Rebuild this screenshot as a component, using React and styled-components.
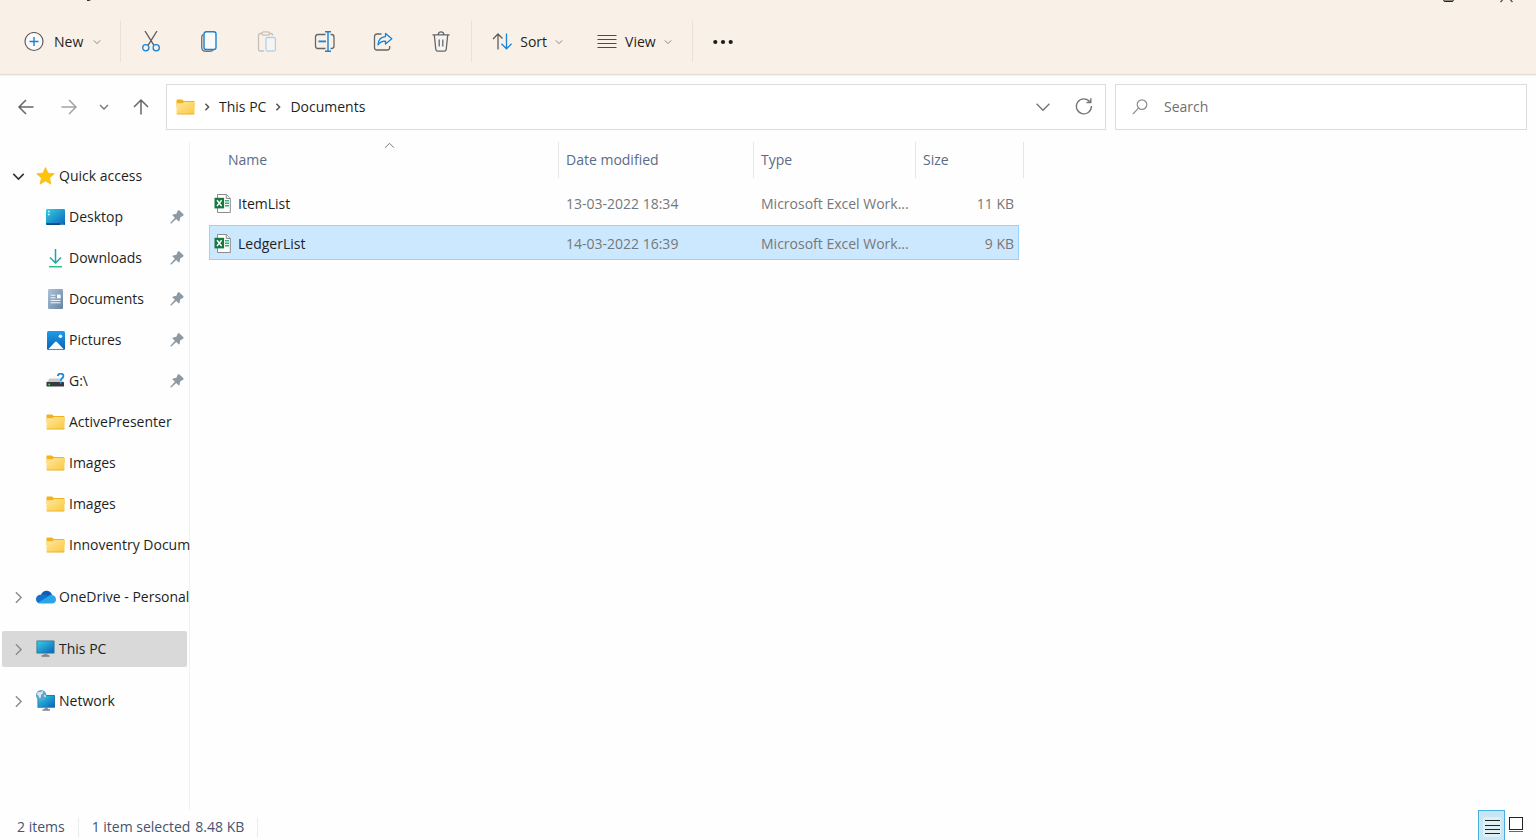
import { useState } from "react";
import styled, { createGlobalStyle } from "styled-components";

const GlobalStyle = createGlobalStyle`
    * { box-sizing: border-box; }
    body {
        margin: 0;
        background: #fefefe;
        color: #1f1f1f;
        font-family: "Open Sans", "Noto Sans", sans-serif;
        font-size: 14px;
        line-height: 20px;
    }
    button, input {
        font: inherit;
        color: inherit;
    }
    svg { display: block; flex: none; }
`;

//toolbar icons
const Chevron = ({ size = 8, color = '#8a8580', dir = 'down', weight = 1 }) => {
    const paths = {
        down: 'M1 3 L5 7 L9 3',
        up: 'M1 7 L5 3 L9 7',
        right: 'M3 1 L7 5 L3 9'
    }
    return <svg width={size} height={size} viewBox="0 0 10 10" fill="none" stroke={color} strokeWidth={weight * 10 / size}>
        <path d={paths[dir]} />
    </svg>
}

const NewIcon = () => <svg width="20" height="20" viewBox="0 0 20 20" fill="none">
    <circle cx="10" cy="9.5" r="9" fill="#fbfaf9" stroke="#5f5f5f" strokeWidth="1.2" />
    <path d="M10 5V14M5.5 9.5H14.5" stroke="#1583d8" strokeWidth="1.4" />
</svg>

const CutIcon = () => <svg width="20" height="22" viewBox="0 0 20 22" fill="none" strokeWidth="1.3">
    <path d="M4 0L12.8 14.2M16 0L7.2 14.2" stroke="#5c5c5c" />
    <circle cx="4.8" cy="16.8" r="3.1" stroke="#1583d8" />
    <circle cx="15.2" cy="16.8" r="3.1" stroke="#1583d8" />
</svg>

const CopyIcon = () => <svg width="18" height="22" viewBox="0 0 18 22" fill="none" strokeWidth="1.4">
    <path d="M3.5 3.5C2 4.1 1.7 4.9 1.7 6.3V16C1.7 18.9 3 20.3 5.8 20.3H10C11.5 20.3 12.6 19.8 13.2 18.7" stroke="#777" />
    <rect x="4" y="0.7" width="12" height="17.8" rx="2.2" fill="#fbfaf9" stroke="#1583d8" />
</svg>

const PasteIcon = () => <svg width="20" height="22" viewBox="0 0 20 22" fill="none" strokeWidth="1.3">
    <path d="M5 2.5H3.4C2.2 2.5 1.5 3.2 1.5 4.5V18C1.5 19.3 2.2 20 3.4 20H7M12 2.5H14C15 2.5 15.6 3.2 15.6 4.5" stroke="#c7c0b9" />
    <rect x="5" y="0.8" width="7.5" height="3.4" rx="1.7" stroke="#c7c0b9" />
    <rect x="9" y="6.5" width="9.4" height="13.5" rx="1.6" fill="#f8f4f0" stroke="#b3d2ea" />
</svg>

const RenameIcon = () => <svg width="22" height="22" viewBox="0 0 22 22" fill="none">
    <path d="M11.5 3.5H4C2.2 3.5 1.5 4.3 1.5 6V15C1.5 16.7 2.2 17.5 4 17.5H11.5M16.5 3.5H17.5C19.3 3.5 20 4.3 20 6V15C20 16.7 19.3 17.5 17.5 17.5H16.5" stroke="#666" strokeWidth="1.3" />
    <path d="M4.5 10.4H12" stroke="#1583d8" strokeWidth="1.8" />
    <path d="M14 0.7V20.3M11 0.7H17M11 20.3H17" stroke="#1583d8" strokeWidth="1.4" />
</svg>

const ShareIcon = () => <svg width="20" height="22" viewBox="0 0 20 22" fill="none" strokeLinejoin="round" strokeWidth="1.3">
    <path d="M8.5 3H4C2.4 3 1.5 3.9 1.5 5.5V16.5C1.5 18.2 2.4 19 4 19H14.2C15.8 19 16.7 18.2 16.7 16.5V15" stroke="#666" />
    <path d="M12.5 2.5L18.8 7.8L12.5 13V10.1C9 9.9 6.8 11.2 5 13.9C5.2 9.3 7.8 5.9 12.5 5.6Z" stroke="#1583d8" />
</svg>

const TrashIcon = () => <svg width="18" height="22" viewBox="0 0 18 22" fill="none" stroke="#666" strokeWidth="1.3">
    <path d="M2.3 4L3.8 18.3C4 19.6 4.6 20.1 5.8 20.1H12.2C13.4 20.1 14 19.6 14.2 18.3L15.7 4" fill="#f7f5f4" />
    <path d="M0.5 3.8H17.5M6.3 3.5C6.3 0 11.7 0 11.7 3.5M7.2 8.5V15.5M10.8 8.5V15.5" />
</svg>

const SortIcon = () => <svg width="20" height="18" viewBox="0 0 20 18" fill="none" strokeWidth="1.3">
    <path d="M6 16.5V1M1 6L6 1L10.5 5.5" stroke="#5c5c5c" />
    <path d="M14.5 0.5V15.8M9.5 10.8L14.5 15.8L19.5 10.8" stroke="#1583d8" />
</svg>

const ViewIcon = () => <svg width="20" height="14" viewBox="0 0 20 14" stroke="#4c4c4c" strokeWidth="1">
    <path d="M0.5 0.5H19.5M0.5 4.5H19.5M0.5 8.5H19.5M0.5 12.5H19.5" />
</svg>

const DotsIcon = () => <svg width="20" height="6" viewBox="0 0 20 6" fill="#1b1b1b">
    <circle cx="2.3" cy="3" r="2.1" /><circle cx="10" cy="3" r="2.1" /><circle cx="17.7" cy="3" r="2.1" />
</svg>

//navigation icons
const Arrow = ({ turn = 0, color = '#666' }) => <svg width="18" height="18" viewBox="0 0 18 18" fill="none" stroke={color} strokeWidth="1.5">
    <path transform={`rotate(${turn} 9 9)`} d="M16.5 9H2M9 2L2 9L9 16" />
</svg>

const RefreshIcon = () => <svg width="18" height="18" viewBox="0 0 18 18" fill="none" stroke="#777" strokeWidth="1.4">
    <path d="M16.4 8A7.5 7.5 0 1 1 14.8 3.7M15.8 0.3V4.5H11.5" />
</svg>

const SearchIcon = () => <svg width="16" height="16" viewBox="0 0 16 16" fill="none" stroke="#8c8c8c" strokeWidth="1.2">
    <circle cx="10" cy="5.6" r="4.8" /><path d="M6.5 9.2L0.8 15.2" />
</svg>

//sidebar icons
const FolderIcon = () => <svg width="19" height="17" viewBox="0 0 19 17">
    <defs><linearGradient id="folder" x1="0" y1="0" x2="1" y2="1">
        <stop offset="0" stopColor="#ffe7a0" /><stop offset="1" stopColor="#fbc93f" />
    </linearGradient></defs>
    <path d="M0.5 1.5C0.5 0.8 0.9 0.5 1.6 0.5H6L7.8 2H17.4C18 2 18.5 2.4 18.5 3.1V8H0.5Z" fill="#f2b21d" />
    <path d="M0.5 4.3H6.4L8 2.9H18.5V14.3C18.5 15 18 15.3 17.4 15.3H1.6C0.9 15.3 0.5 15 0.5 14.3Z" fill="url(#folder)" />
    <path d="M0.8 15H18.2" stroke="#e9ad2b" strokeWidth="0.8" />
</svg>

const StarIcon = () => <svg width="19" height="19" viewBox="0 0 19 19">
    <path d="M9.5 0.5L12 6.2L18.2 6.8L13.5 10.9L14.9 17.1L9.5 13.9L4.1 17.1L5.5 10.9L0.8 6.8L7 6.2Z" fill="#fcc50b" stroke="#fbb90c" strokeWidth="0.8" strokeLinejoin="round" />
</svg>

const DesktopIcon = () => <svg width="19" height="17" viewBox="0 0 19 17">
    <defs><linearGradient id="screen" x1="0" y1="0" x2="1" y2="1">
        <stop offset="0" stopColor="#32cfe4" /><stop offset="1" stopColor="#0c64b9" />
    </linearGradient></defs>
    <rect width="19" height="16" rx="1.2" fill="url(#screen)" />
    <path d="M0 14.3H19V14.8C19 15.5 18.5 16 17.8 16H1.2C0.5 16 0 15.5 0 14.8Z" fill="#0a4c83" />
    <path d="M2 2.6H3.6M2 5.6H3.6" stroke="#e4fbff" strokeWidth="1.5" />
    <path d="M14.5 15.2H15.5M16.5 15.2H17.5" stroke="#d8efff" />
</svg>

const DownloadIcon = () => <svg width="19" height="20" viewBox="0 0 19 20" fill="none" strokeWidth="1.5">
    <path d="M9.5 1V15M4 9.5L9.5 15L15 9.5" stroke="#20a6a1" />
    <path d="M3 18.7H16" stroke="#29c08a" />
</svg>

const DocumentIcon = () => <svg width="19" height="20" viewBox="0 0 19 20">
    <defs><linearGradient id="doc" x1="0" y1="0" x2="1" y2="1">
        <stop offset="0" stopColor="#adc2d7" /><stop offset="1" stopColor="#6583a4" />
    </linearGradient></defs>
    <rect x="2" width="15" height="20" rx="1.3" fill="url(#doc)" />
    <path d="M4.7 6.2H9.5M4.7 8.8H9.5M4.7 11.4H14.5M4.7 13.8H14.5" stroke="#f4f8fc" />
    <rect x="11" y="5.6" width="3.6" height="3.8" fill="#fff" />
</svg>

const PictureIcon = () => <svg width="18" height="19" viewBox="0 0 18 19">
    <defs><linearGradient id="pic" x1="0" y1="0" x2="0" y2="1">
        <stop offset="0" stopColor="#1d9ce9" /><stop offset="1" stopColor="#0b62b8" />
    </linearGradient></defs>
    <rect width="18" height="19" rx="1.5" fill="url(#pic)" />
    <path d="M1.2 18.2L8 10.9C8.7 10.2 9.3 10.2 10 10.9L16.8 18.2Z" fill="#f4faff" />
    <circle cx="13.4" cy="5.2" r="1.8" fill="#e9f6ff" />
</svg>

const DriveIcon = () => <svg width="19" height="17" viewBox="0 0 19 17">
    <path d="M3.5 5.5H14L18 9.5H0.5Z" fill="#c6c8ca" />
    <rect x="0.5" y="9" width="17.5" height="4.6" rx="0.6" fill="#37393b" />
    <circle cx="3.2" cy="11.4" r="1" fill="#3ddc55" />
    <path d="M11.7 3C12.3 -0.3 17.6 -0.2 17.4 3.1C17.3 5.3 14.7 5.3 14.7 7.7" fill="none" stroke="#1b8ad8" strokeWidth="1.8" />
    <circle cx="14.7" cy="9.8" r="1.1" fill="#1b8ad8" />
</svg>

const CloudIcon = () => <svg width="20" height="14" viewBox="0 0 20 14">
    <path d="M5 5C6.3 1.6 9 0.3 12 1C14.2 1.5 15.5 3 16 5L10 9.5Z" fill="#0a5cb5" />
    <path d="M5 4.7C2 4.6 0 6.8 0 9.2C0 11.2 1.2 12.8 3 13.2L13.5 7.2C11 5 8 4.2 5 4.7Z" fill="#1173cb" />
    <path d="M12 6.5C13.5 4.8 15.5 4.4 17 5.3C19.2 6 20 8 20 9.8C20 12 18.3 13.6 16 13.6H4.5C3.5 13.6 2.7 13.3 2 12.7Z" fill="#2aa5ea" />
</svg>

const PcIcon = () => <svg width="19" height="18" viewBox="0 0 19 18">
    <rect x="0.5" y="0.5" width="18" height="13" rx="0.6" fill="#2e6f94" />
    <rect x="1.3" y="1.3" width="16.4" height="11.4" fill="url(#screen)" />
    <path d="M7.5 13.5H11.5V15.5H7.5Z" fill="#8796a3" /><path d="M5.5 16H13.5" stroke="#57636e" strokeWidth="1.2" />
</svg>

const NetworkIcon = () => <svg width="20" height="22" viewBox="0 0 20 22">
    <rect x="1.5" y="5" width="17.5" height="12.8" rx="0.6" fill="#2e6f94" />
    <rect x="2.3" y="5.8" width="16" height="11.2" fill="url(#screen)" />
    <path d="M8.5 17.8H12V19.5H8.5Z" fill="#8796a3" /><path d="M6.5 20H14" stroke="#57636e" strokeWidth="1.2" />
    <circle cx="5.2" cy="5.2" r="5.2" fill="#5ba3cb" />
    <path d="M2 2C4 2.5 5 1.5 6.5 1C8 2.5 6.5 4 5.5 4.5C4.5 5.5 5.5 7.5 4 8.5C2.5 7.5 2.8 5 1 4.5C1 3.5 1.4 2.5 2 2ZM8 5C9 4.5 10 5.5 9.7 6.7C9 8 7.5 6.5 8 5Z" fill="#d0e8f2" />
</svg>

const PinIcon = () => <svg width="14" height="14" viewBox="0 0 14 14" fill="#8e9aa3">
    <path d="M7.8 0.6C8.4 0.1 9.2 0.2 9.7 0.7L13.2 4C13.8 4.6 13.7 5.4 13 5.8L10.2 7.5L9.6 10.8C9.4 11.4 8.8 11.6 8.3 11.1L6.2 9L1.4 13.4L0.4 13.6L0.6 12.6L4.9 7.8L2.8 5.8C2.3 5.3 2.5 4.7 3.1 4.5L6.4 3.8Z" />
</svg>

const ExcelIcon = () => <svg width="18" height="20" viewBox="0 0 18 20">
    <path d="M3.5 0.5H12.5L16.3 4.3V18.5H3.5Z" fill="#fff" stroke="#8b8b8b" />
    <path d="M12.3 0.5V4.5H16.3" fill="#eee" stroke="#8b8b8b" />
    <path d="M11 6.8H15M11 9.3H15M11 11.8H15" stroke="#36b37a" strokeWidth="1.5" />
    <rect x="0.5" y="3.8" width="9.6" height="10.6" fill="#15793f" />
    <path d="M3 6.2L7.6 12M7.6 6.2L3 12" stroke="#fff" strokeWidth="1.4" />
</svg>

const quickAccess = [
    { name: 'Desktop', icon: <DesktopIcon />, pinned: true },
    { name: 'Downloads', icon: <DownloadIcon />, pinned: true },
    { name: 'Documents', icon: <DocumentIcon />, pinned: true },
    { name: 'Pictures', icon: <PictureIcon />, pinned: true },
    { name: 'G:\\', icon: <DriveIcon />, pinned: true },
    { name: 'ActivePresenter', icon: <FolderIcon /> },
    { name: 'Images', icon: <FolderIcon /> },
    { name: 'Images', icon: <FolderIcon /> },
    { name: 'Innoventry Docum', icon: <FolderIcon /> }
]

const places = [
    { name: 'OneDrive - Personal', icon: <CloudIcon /> },
    { name: 'This PC', icon: <PcIcon /> },
    { name: 'Network', icon: <NetworkIcon /> }
]

const files = [
    { name: 'ItemList', date: '13-03-2022 18:34', type: 'Microsoft Excel Work...', size: '11 KB' },
    { name: 'LedgerList', date: '14-03-2022 16:39', type: 'Microsoft Excel Work...', size: '9 KB' }
]

const App = () => {
    const [place, setPlace] = useState('This PC');
    const [selected, setSelected] = useState('LedgerList');
    const [search, setSearch] = useState('');

    return <Wrapper>
        <GlobalStyle />
        <TitleEdge>
            <svg width="4" height="3" viewBox="0 0 4 3"><path d="M0 0.5H2L3.5 0" stroke="#333" fill="none" /></svg>
            <WindowMarks>
                <svg width="11" height="3" viewBox="0 0 11 3"><path d="M0.7 0C0.7 1.2 1 1.5 2 1.5H9C10 1.5 10.3 1.2 10.3 0" fill="#8f8b86" stroke="#222" /></svg>
                <svg width="13" height="3" viewBox="0 0 13 3"><path d="M2.5 0L0.5 2M10.5 0L12.5 2" fill="none" stroke="#444" strokeWidth="1.2" /></svg>
            </WindowMarks>
        </TitleEdge>
        <Toolbar>
            <MenuButton><NewIcon />New<Chevron /></MenuButton>
            <Separator />
            <IconGroup>
                <IconButton aria-label="Cut"><CutIcon /></IconButton>
                <IconButton aria-label="Copy"><CopyIcon /></IconButton>
                <IconButton aria-label="Paste" disabled><PasteIcon /></IconButton>
                <IconButton aria-label="Rename"><RenameIcon /></IconButton>
                <IconButton aria-label="Share"><ShareIcon /></IconButton>
                <IconButton aria-label="Delete"><TrashIcon /></IconButton>
            </IconGroup>
            <Separator />
            <MenuGroup>
                <MenuButton $compact><SortIcon />Sort<Chevron /></MenuButton>
                <MenuButton $compact><ViewIcon />View<Chevron /></MenuButton>
            </MenuGroup>
            <Separator />
            <MenuGroup $wide>
                <IconButton aria-label="See more"><DotsIcon /></IconButton>
            </MenuGroup>
        </Toolbar>
        <AddressRow>
            <NavButtons>
                <NavButton aria-label="Back"><Arrow /></NavButton>
                <NavButton aria-label="Forward"><Arrow turn={180} color="#a3a3a3" /></NavButton>
                <NavButton aria-label="Recent locations"><Chevron size={10} color="#777" weight={1.4} /></NavButton>
                <NavButton aria-label="Up"><Arrow turn={90} /></NavButton>
            </NavButtons>
            <AddressBar>
                <FolderIcon />
                <Chevron dir="right" color="#555" weight={1.5} />
                <Crumb href="#this-pc">This PC</Crumb>
                <Chevron dir="right" color="#555" weight={1.5} />
                <Crumb href="#documents">Documents</Crumb>
                <BarButtons>
                    <NavButton aria-label="Previous locations"><Chevron size={16} color="#777" weight={1.4} /></NavButton>
                    <NavButton aria-label="Refresh"><RefreshIcon /></NavButton>
                </BarButtons>
            </AddressBar>
            <SearchBox>
                <SearchIcon />
                <input aria-label="Search" placeholder="Search" value={search} onChange={(e) => setSearch(e.target.value)} />
            </SearchBox>
        </AddressRow>
        <Body>
            <Sidebar>
                <TreeItem>
                    <Chevron dir="down" size={13} color="#333" weight={1.6} />
                    <StarIcon /><span>Quick access</span>
                </TreeItem>
                {quickAccess.map((item, i) => <TreeItem key={i} $child $active={place === item.name} onClick={() => setPlace(item.name)}>
                    <IconSlot>{item.icon}</IconSlot><span>{item.name}</span>{item.pinned && <PinIcon />}
                </TreeItem>)}
                {places.map((item) => <TreeItem key={item.name} $spaced $active={place === item.name} onClick={() => setPlace(item.name)}>
                    <Chevron dir="right" size={13} color="#8a8a8a" weight={1.4} />
                    <IconSlot>{item.icon}</IconSlot><span>{item.name}</span>
                </TreeItem>)}
            </Sidebar>
            <Files>
                <FileTable>
                    <thead>
                        <HeadRow>
                            <th>Name<SortMark><Chevron dir="up" size={11} color="#777" /></SortMark></th>
                            <th>Date modified</th>
                            <th>Type</th>
                            <th>Size</th>
                        </HeadRow>
                    </thead>
                    <tbody>
                        {files.map((file) => <FileRow key={file.name} $selected={selected === file.name} onClick={() => setSelected(file.name)}>
                            <td><ExcelIcon />{file.name}</td>
                            <td>{file.date}</td>
                            <td>{file.type}</td>
                            <td>{file.size}</td>
                        </FileRow>)}
                    </tbody>
                </FileTable>
            </Files>
        </Body>
        <StatusBar>
            <StatusText>2 items</StatusText>
            <StatusText><span>1 item selected</span><span>8.48 KB</span></StatusText>
            <ViewButtons>
                <ViewButton $active aria-label="Details view">
                    <svg width="18" height="20" viewBox="0 0 18 20"><rect width="18" height="20" rx="2" fill="#e0eff4" /><path d="M2 3.5H17M2 8.5H17M2 12.5H17M2 16.5H17" stroke="#222" /></svg>
                </ViewButton>
                <ViewButton aria-label="Large icons view">
                    <svg width="16" height="17" viewBox="0 0 16 17" fill="none" stroke="#222"><rect x="1.5" y="1.5" width="13" height="12" fill="#fff" /><path d="M1 15.5H15" stroke="#666" /></svg>
                </ViewButton>
            </ViewButtons>
        </StatusBar>
    </Wrapper>
}

export default App;

const Wrapper = styled.div`
    display: flex;
    flex-direction: column;
    min-height: 100vh;
`;

const TitleEdge = styled.div`
    display: flex;
    justify-content: space-between;
    height: 3px;
    padding: 0 23px 0 87px;
    background: #f9f1e8;
`;

const WindowMarks = styled.div`
    display: flex;
    gap: 46px;
`;

const Toolbar = styled.div`
    display: flex;
    align-items: center;
    padding: 18px 16px 12px;
    background: #f9f1e8;
    border-bottom: 1px solid #e6dcd3;
    box-shadow: 0 1px 0 #f5f2ee;
`;

const MenuButton = styled.button`
    display: flex;
    align-items: center;
    gap: ${(p) => p.$compact ? '8px' : '10px'};
    height: 32px;
    padding: 0 ${(p) => p.$compact ? '14px' : '8px'};
    margin-right: ${(p) => p.$compact ? '0' : '11px'};
    border: 0;
    background: none;
`;

const MenuGroup = styled.div`
    display: flex;
    gap: 6px;
    padding: 0 ${(p) => p.$wide ? '10px' : '6px'};
`;

const Separator = styled.span`
    width: 1px;
    height: 41px;
    background: #e9e0d7;
`;

const IconGroup = styled.div`
    display: flex;
    gap: 18px;
    padding: 0 10px;
`;

const IconButton = styled.button`
    display: flex;
    align-items: center;
    justify-content: center;
    width: 40px;
    height: 32px;
    padding: 0;
    border: 0;
    background: none;
`;

const AddressRow = styled.div`
    display: flex;
    padding: 9px 9px 0 4px;
`;

const NavButtons = styled.div`
    display: grid;
    grid-template-columns: 43px 43px 28px 46px;
    margin-right: 2px;
`;

const NavButton = styled.button`
    display: flex;
    align-items: center;
    justify-content: center;
    padding: 0;
    border: 0;
    background: none;
`;

const AddressBar = styled.div`
    display: flex;
    flex: 1;
    align-items: center;
    gap: 8px;
    height: 46px;
    margin-right: 9px;
    padding: 0 9px;
    border: 1px solid #dcdcdc;
    background: #fff;
`;

const Crumb = styled.a`
    color: inherit;
    text-decoration: none;
`;

const BarButtons = styled.div`
    display: grid;
    grid-template-columns: 58px 24px;
    margin-left: auto;
`;

const SearchBox = styled.label`
    display: flex;
    align-items: center;
    gap: 16px;
    width: 412px;
    padding: 0 16px;
    border: 1px solid #dcdcdc;
    background: #fff;
    input {
        flex: 1;
        min-width: 0;
        padding: 0;
        border: 0;
        outline: 0;
        background: none;
    }
    input::placeholder {
        color: #707070;
        opacity: 1;
    }
`;

const Body = styled.div`
    display: flex;
    flex: 1;
    padding-top: 12px;
`;

const Sidebar = styled.nav`
    display: flex;
    flex-direction: column;
    flex: none;
    gap: 5px;
    width: 190px;
    padding: 16px 2px 0;
    border-right: 1px solid #f1f1f1;
`;

const TreeItem = styled.button`
    display: flex;
    align-items: center;
    gap: 4px;
    height: 36px;
    margin-top: ${(p) => p.$spaced ? '11px' : '0'};
    padding: 0 3px 0 ${(p) => p.$child ? '44px' : '10px'};
    border: 0;
    border-radius: 2px;
    background: ${(p) => p.$active ? '#d9d9d9' : 'none'};
    text-align: left;
    span {
        flex: 1;
        min-width: 0;
        white-space: nowrap;
    }
    > svg:first-child {
        margin-right: 7px;
    }
`;

const IconSlot = styled.i`
    display: flex;
    justify-content: center;
    flex: none;
    width: 19px;
`;

const Files = styled.main`
    flex: 1;
    padding-left: 19px;
`;

const FileTable = styled.table`
    display: block;
    thead {
        display: block;
        margin-bottom: 7px;
    }
    tbody {
        display: grid;
        gap: 5px;
    }
`;

const HeadRow = styled.tr`
    display: grid;
    grid-template-columns: 350px 195px 162px 108px;
    th {
        position: relative;
        height: 36px;
        padding: 0 7px;
        border-right: 1px solid #e6e6e6;
        color: #5a6b87;
        font-weight: 400;
        line-height: 36px;
        text-align: left;
    }
    th:first-child {
        padding-left: 19px;
    }
`;

const SortMark = styled.span`
    position: absolute;
    top: -2px;
    left: 50%;
`;

const FileRow = styled.tr`
    display: grid;
    grid-template-columns: 349px 195px 162px 102px;
    width: max-content;
    border: 1px solid ${(p) => p.$selected ? '#99d1ff' : 'transparent'};
    background: ${(p) => p.$selected ? '#cce8ff' : 'none'};
    td {
        display: flex;
        align-items: center;
        gap: 6px;
        height: 33px;
        padding: 2px 7px 0;
        color: #777;
    }
    td:first-child {
        padding-left: 4px;
        color: #1f1f1f;
    }
    td:last-child {
        justify-content: flex-end;
        padding-right: 4px;
    }
`;

const StatusBar = styled.footer`
    display: flex;
    height: 30px;
    padding: 0 9px;
    color: #44546e;
`;

const StatusText = styled.div`
    display: flex;
    gap: 5px;
    height: 20px;
    margin-top: 7px;
    padding: 0 13px 0 8px;
    border-right: 1px solid #ececec;
    & + & {
        padding-left: 13px;
    }
`;

const ViewButtons = styled.div`
    display: flex;
    margin-left: auto;
`;

const ViewButton = styled.button`
    display: flex;
    justify-content: center;
    align-items: flex-start;
    width: ${(p) => p.$active ? '27px' : '22px'};
    padding: 6px 0 0;
    border: ${(p) => p.$active ? '1px solid #4aafe0' : '0'};
    border-bottom: 0;
    background: ${(p) => p.$active ? '#c6e6f5' : 'none'};
`;
